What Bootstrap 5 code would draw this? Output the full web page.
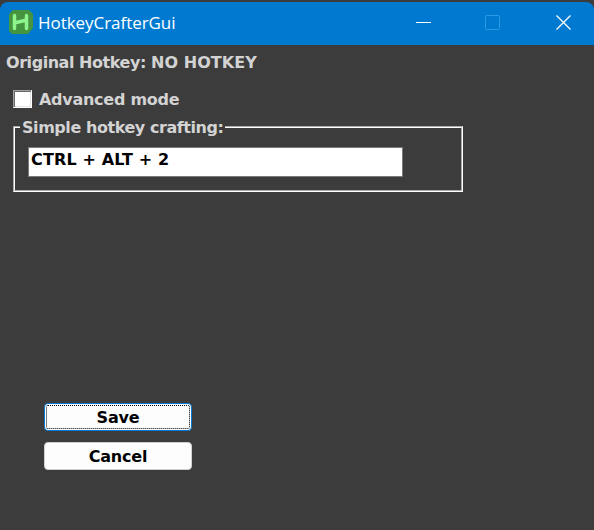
<!DOCTYPE html>
<html lang="en">
<head>
<meta charset="utf-8">
<title>HotkeyCrafterGui</title>
<link href="https://cdn.jsdelivr.net/npm/bootstrap@5.3.0/dist/css/bootstrap.min.css" rel="stylesheet">
<style>
html, body { height: 100%; }
body { background: #3c3c3c; overflow: hidden; padding-top: 2px; }
.crafter { height: 528px; background: #3c3c3c; color: #d3d3d3; border-radius: 8px 8px 0 0; font: bold 16px/20px "DejaVu Sans", sans-serif; letter-spacing: -.27px; overflow: hidden; }
.titlebar { height: 43px; background: #007ad0; padding: 0 22px 0 9px; }
.caption-text { font: 400 17px/24px "Open Sans", "Noto Sans", sans-serif; color: #fff; letter-spacing: -.05px; margin-left: 5px; margin-top: -1px; }
.controls { gap: 54px; margin-top: -3px; }
.origin { padding: 8px 6px 0; letter-spacing: -.45px; }
.origin .origin-value { letter-spacing: .05px; }
.check-row { padding: 16px 13px 0; gap: 7px; }
.check-row label { padding-top: 1px; margin-bottom: -1px; }
.check-row .form-check-input { width: 19px; height: 18px; margin: 0; border-radius: 0; background-color: #fff; border: 1px solid; border-color: #a0a0a0 #fff #fff #a0a0a0; box-shadow: inset 1px 1px #696969, inset -1px -1px #e3e3e3; }
.hotkey-group { width: 450px; height: 75px; margin: 8px 0 0 13px; padding: 0 13px; border: 2px groove #fff; }
.hotkey-group legend { float: none; width: auto; height: 20px; margin: 0 0 10px -8px; padding: 1px 1px 0 2px; font: inherit; color: inherit; letter-spacing: -.44px; }
.hotkey-input.form-control { width: 375px; height: 30px; border-radius: 0; border: 1px solid #7a7a7a; padding: 0 2px 6px; background: #fff; color: #000; font: inherit; letter-spacing: .15px; }
.actions { width: 148px; margin: 211px 0 0 44px; gap: 11px; }
.actions .btn { height: 28px; padding: 2px 0 0; font: inherit; letter-spacing: -.2px; color: #000; background: #fdfdfd; border: 1px solid #d0d0d0; border-radius: 4px; }
.actions .btn-save { border: 1px solid #0078d4; outline: 1px dotted #000; outline-offset: -3px; }
</style>
<script src="https://cdn.jsdelivr.net/npm/bootstrap@5.3.0/dist/js/bootstrap.bundle.min.js"></script>
</head>
<body>
<main class="crafter">
  <header class="titlebar d-flex align-items-center">
    <svg class="mb-1" width="24" height="24" viewBox="0 0 24 24"><path d="M4 0h16l4 4v14l-5 6H3l-3-3V4z" fill="#449440"/><path d="M5.5 5.5v13M17.5 5.5v13M6 12.8l11-2.5" stroke="#8df58b" stroke-width="3.5" stroke-linecap="round" fill="none"/></svg>
    <span class="caption-text">HotkeyCrafterGui</span>
    <div class="controls d-flex ms-auto">
      <svg width="16" height="16"><path d="M0 8.5h15" stroke="#fff"/></svg>
      <svg width="16" height="16" viewBox="1 0 16 16" overflow="visible"><rect x=".5" y="1.5" width="14" height="14" rx="1" fill="none" stroke="#2d99e3"/></svg>
      <svg width="16" height="16"><path d="M.5 1.5l14 14m0-14l-14 14" stroke="#fff" stroke-width="1.3"/></svg>
    </div>
  </header>
  <div class="origin">Original Hotkey: <span class="origin-value">NO HOTKEY</span></div>
  <div class="check-row d-flex align-items-center">
    <input class="form-check-input" type="checkbox" id="advanced"><label for="advanced">Advanced mode</label>
  </div>
  <fieldset class="hotkey-group">
    <legend>Simple hotkey crafting:</legend>
    <input class="hotkey-input form-control" type="text" value="CTRL + ALT + 2" aria-label="Hotkey">
  </fieldset>
  <div class="actions d-flex flex-column">
    <button class="btn btn-save" type="button">Save</button>
    <button class="btn" type="button">Cancel</button>
  </div>
</main>
</body>
</html>
